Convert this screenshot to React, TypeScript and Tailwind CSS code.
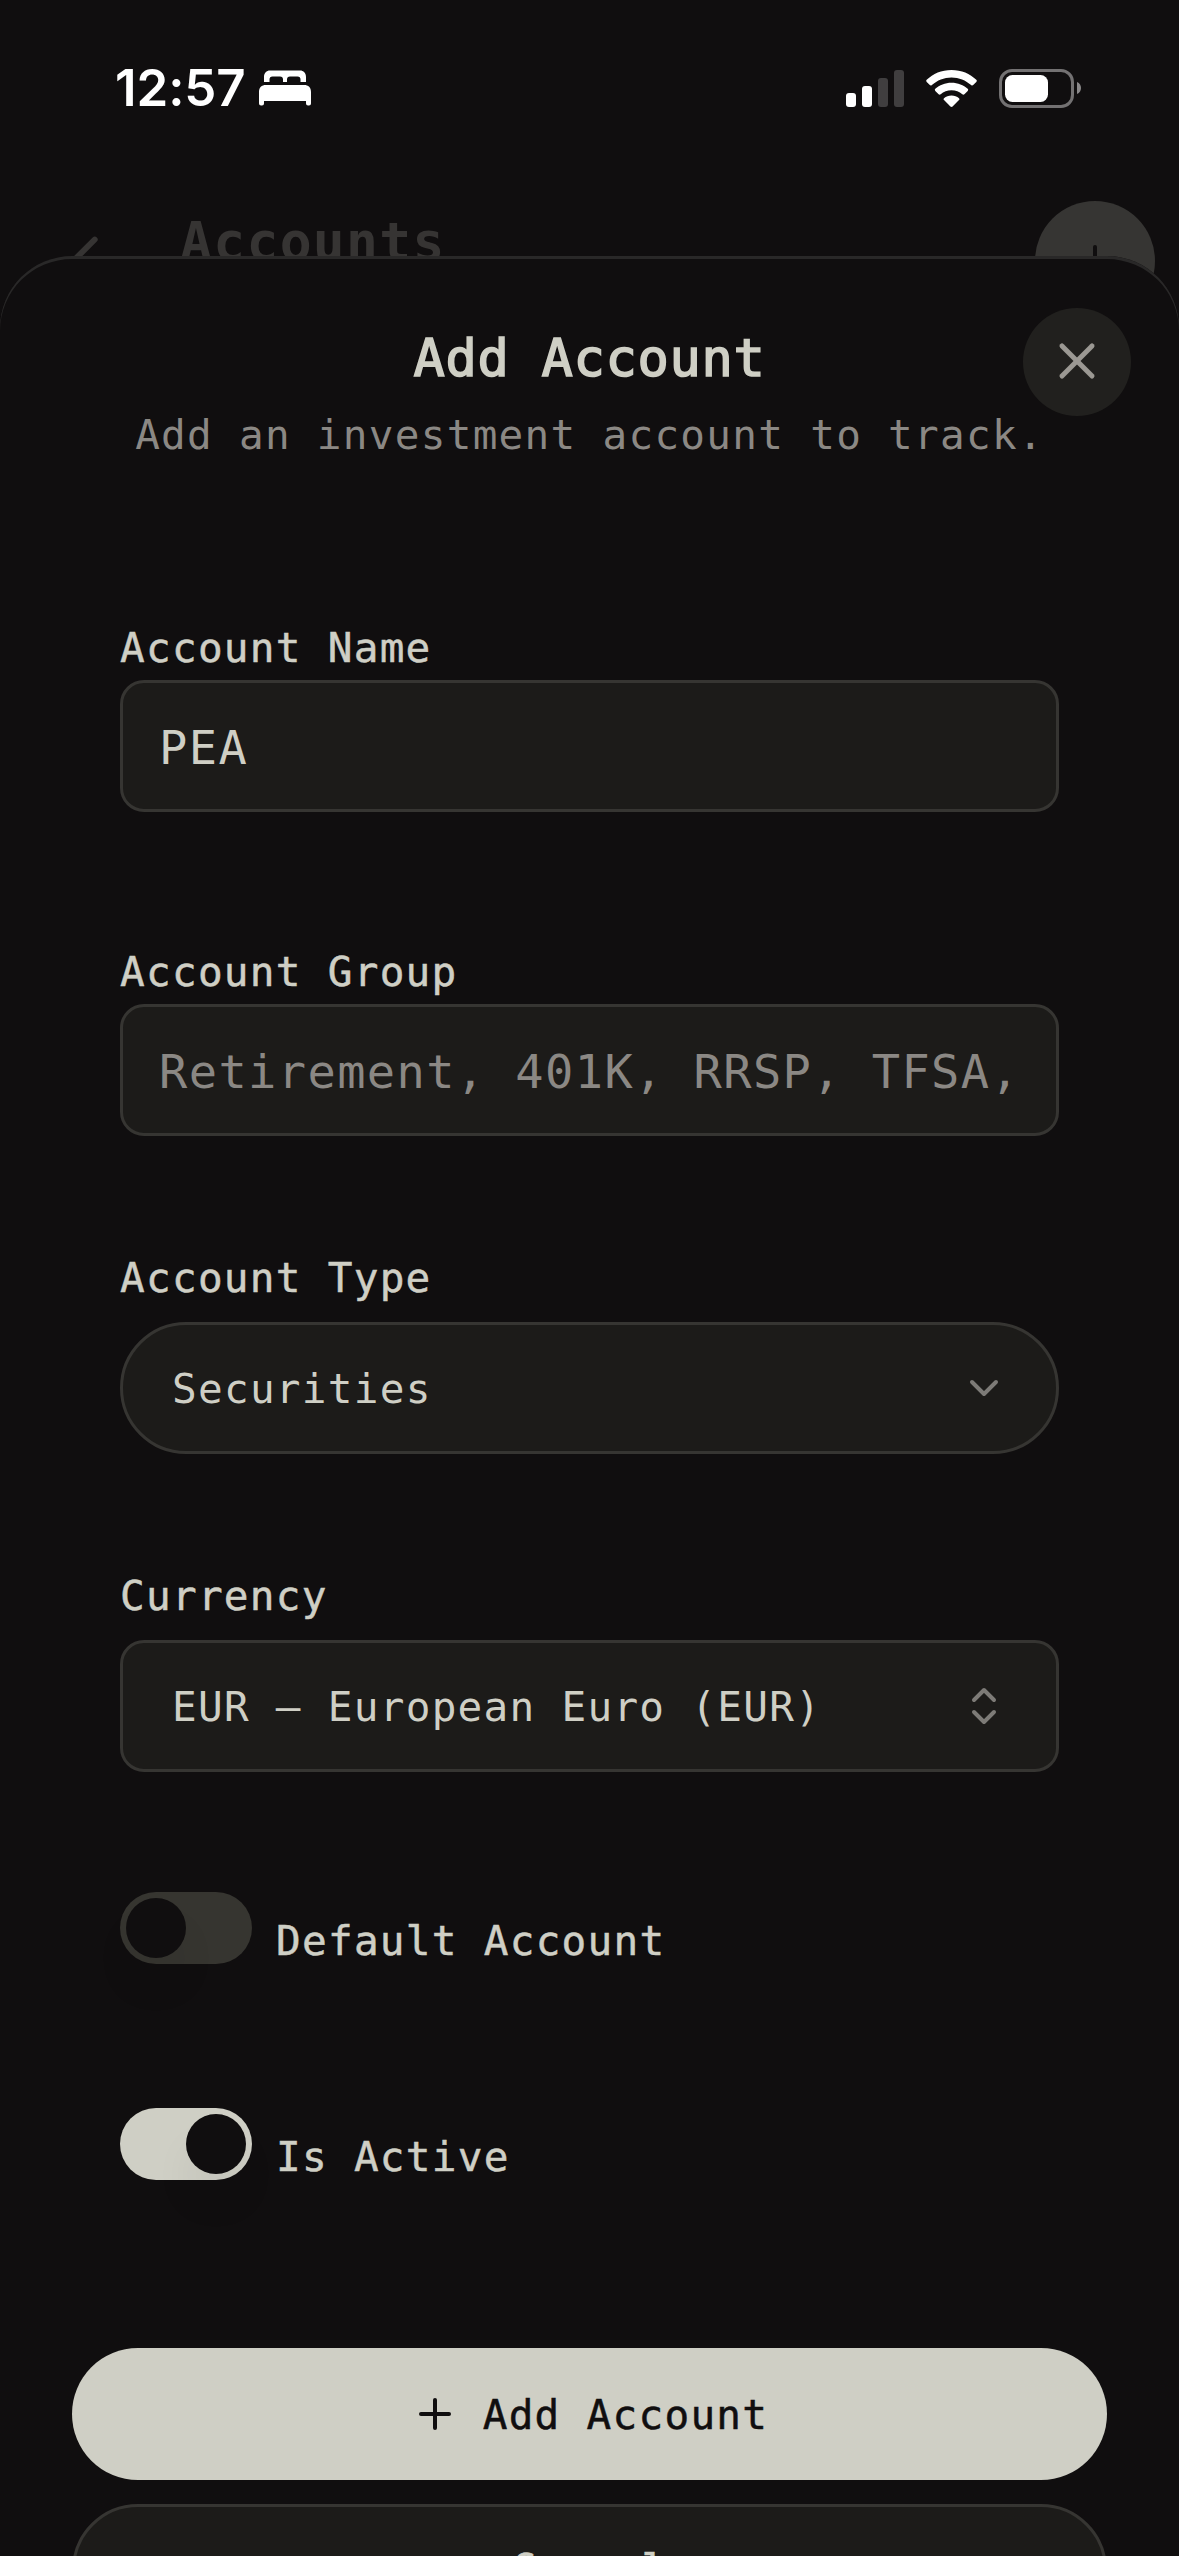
import type { ReactNode } from "react";
import { ChevronDown, ChevronLeft, ChevronsUpDown, Plus, X } from "lucide-react";

function StatusBar() {
  return (
    <div className="flex h-[201px] items-start justify-between pl-[115px] pr-[97px] pt-[57px] text-white">
      <div className="flex h-[62px] items-center">
        <span className="w-[144px] font-['Inter',sans-serif] text-[51px] font-semibold leading-[62px] tracking-[-0.100px]">
          12:57
        </span>
        <svg width="52" height="36" viewBox="0 0 52 36" fill="currentColor">
          <path d="M5 12V7C5 3 7.500 0.500 11 0.500H41C44.500 0.500 47 3 47 7V12H41.500V9.500C41.500 7.500 40.500 6.500 38.500 6.500H31C29 6.500 28 7.500 28 9.500V12H24V9.500C24 7.500 23 6.500 21 6.500H13.500C11.500 6.500 10.500 7.500 10.500 9.500V12Z" />
          <path d="M0 22C0 17.500 2.500 15 7 15H45C49.500 15 52 17.500 52 22V33.500Q52 35.500 50 35.500H49Q47 35.500 47 33.500V31H5V33.500Q5 35.500 3 35.500H2Q0 35.500 0 33.500Z" />
        </svg>
      </div>
      <div className="flex h-[62px] items-center">
        <div className="mr-[22px] flex h-[37px] items-end gap-[6px]">
          <div className="h-[14px] w-[10px] rounded-[3px] bg-white" />
          <div className="h-[21px] w-[10px] rounded-[3px] bg-white" />
          <div className="h-[29px] w-[10px] rounded-[3px] bg-[#403e3f]" />
          <div className="h-[37px] w-[10px] rounded-[3px] bg-[#403e3f]" />
        </div>
        <svg className="mr-[22px]" width="51" height="37" viewBox="0 0 51 37" fill="currentColor">
          <path d="M25.500 0C35.500 0 44 3.700 50.300 9.800Q51.300 10.800 50.300 11.900L47.200 15.100Q46.200 16 45.100 15C39.800 10.200 33 7.400 25.500 7.400S11.200 10.200 5.900 15Q4.800 16 3.800 15.100L0.700 11.900Q-0.300 10.800 0.700 9.800C7 3.700 15.500 0 25.500 0Z" />
          <path d="M25.500 12.700C31.900 12.700 37.500 15 41.700 18.800Q42.800 19.900 41.700 21L38.400 24.300Q37.400 25.200 36.300 24.300C33.400 21.800 29.700 20.300 25.500 20.300S17.600 21.800 14.700 24.300Q13.600 25.200 12.600 24.300L9.300 21Q8.200 19.900 9.300 18.800C13.500 15 19.100 12.700 25.500 12.700Z" />
          <path d="M25.500 25.500C28.400 25.500 31 26.500 33 28.200Q33.900 29.100 33 30.100L26.600 36.500Q25.500 37.400 24.400 36.500L18 30.100Q17.100 29.100 18 28.200C20 26.500 22.600 25.500 25.500 25.500Z" />
        </svg>
        <svg width="83" height="39" viewBox="0 0 83 39">
          <rect x="1.500" y="1.500" width="72" height="36" rx="11.500" fill="none" stroke="#737172" strokeWidth="3" />
          <rect x="6" y="6" width="43" height="27" rx="7.500" fill="#fff" />
          <path d="M78 13C80.800 14.200 82 16.500 82 19S80.800 23.800 78 25Z" fill="#8a8889" />
        </svg>
      </div>
    </div>
  );
}

function PageHeader() {
  return (
    <div className="flex h-[120px] items-start pl-[46px] pr-[24px] text-[#363433]">
      <ChevronLeft className="mt-[19px] size-[78px]" strokeWidth={1.8} />
      <div className="ml-[56px] mt-[11px] flex-1 text-[53px] font-bold leading-[60px] tracking-[1.300px]">
        Accounts
      </div>
      <div className="flex size-[120px] items-center justify-center rounded-full bg-[#363533] text-[#100e0f]">
        <Plus className="size-[48px]" strokeWidth={2} />
      </div>
    </div>
  );
}

function Label({ children }: { children: ReactNode }) {
  return (
    <div className="text-[41px] leading-[60px] tracking-[1.280px] [-webkit-text-stroke:0.500px_#cfcfc5]">
      {children}
    </div>
  );
}

function Switch({ on, label }: { on?: boolean; label: string }) {
  return (
    <div className="flex h-[72px] items-center gap-[24px]">
      <div
        className={
          on
            ? "flex h-[72px] w-[132px] justify-end rounded-full bg-[#cfcfc5] p-[6px]"
            : "flex h-[72px] w-[132px] rounded-full bg-[#363530] p-[6px]"
        }
      >
        <div className="size-[60px] rounded-full bg-[#100e0f] shadow-[0_30px_45px_-9px_rgb(0_0_0/0.1)]" />
      </div>
      <div className="pt-[26px]">
        <Label>{label}</Label>
      </div>
    </div>
  );
}

const field = "flex h-[132px] items-center border-[3px] border-[#363532] bg-[#1c1b19]";

export default function App() {
  return (
    <div className="h-[2556px] w-[1179px] overflow-hidden bg-[#100e0f] font-['DejaVu_Sans_Mono',monospace] text-[#cfcfc5]">
      <StatusBar />
      <PageHeader />
      <div className="relative -mt-[65px] h-[2300px] rounded-t-[72px] bg-[#100e0f] px-[72px] pt-[73px] shadow-[inset_0_3px_0_#292828]">
        <div className="text-center text-[52px] leading-[58px] tracking-[0.700px] [-webkit-text-stroke:1.600px_#cfcfc5]">
          Add Account
        </div>
        <div className="mt-[18px] text-center text-[41px] leading-[60px] tracking-[1.280px] text-[#8b8884]">
          Add an investment account to track.
        </div>
        <button
          aria-label="Close"
          className="absolute right-[48px] top-[52px] flex size-[108px] items-center justify-center rounded-full bg-[#21201e] pb-[2px] text-[#9b9893]"
        >
          <X className="size-[60px]" strokeWidth={2} />
        </button>

        <div className="flex flex-col px-[48px] pt-[153px]">
          <div className="flex flex-col gap-[2px]">
            <Label>Account Name</Label>
            <div className={`${field} rounded-[24px] px-[36px] pt-[4px] text-[47px] tracking-[1.400px]`}>PEA</div>
          </div>
          <div className="mt-[130px] flex flex-col gap-[2px]">
            <Label>Account Group</Label>
            <div className={`${field} whitespace-nowrap rounded-[24px] px-[36px] pt-[4px] text-[47px] tracking-[1.400px] text-[#8b8884]`}>
              Retirement, 401K, RRSP, TFSA,
            </div>
          </div>
          <div className="mt-[112px] flex flex-col gap-[14px]">
            <Label>Account Type</Label>
            <div className={`${field} justify-between rounded-full px-[48px] text-[41px] tracking-[1.280px]`}>
              <span className="pl-px pt-[3px]">Securities</span>
              <ChevronDown className="mb-px size-[48px] text-[#7d7b77]" strokeWidth={2} />
            </div>
          </div>
          <div className="mt-[112px] flex flex-col gap-[14px]">
            <Label>Currency</Label>
            <div className={`${field} justify-between rounded-[24px] px-[48px] text-[41px] tracking-[1.280px]`}>
              <span className="pl-px pt-[3px]">EUR – European Euro (EUR)</span>
              <ChevronsUpDown className="mb-px size-[48px] text-[#7d7b77]" strokeWidth={2} />
            </div>
          </div>
          <div className="mt-[120px] flex flex-col gap-[144px]">
            <Switch label="Default Account" />
            <Switch on label="Is Active" />
          </div>
        </div>

        <div className="mt-[168px] flex flex-col gap-[24px]">
          <button className="flex h-[132px] items-center justify-center gap-[24px] rounded-full bg-[#cfcfc5] text-[41px] tracking-[1.280px] text-[#100e0f] [-webkit-text-stroke:0.500px_#100e0f]">
            <Plus className="size-[48px]" strokeWidth={2} />
            <span className="pt-[3px]">Add Account</span>
          </button>
          <button className="flex h-[132px] items-center justify-center rounded-full border-[3px] border-[#363532] bg-[#1c1b19] text-[41px] tracking-[1.280px] [-webkit-text-stroke:0.500px_#cfcfc5]">
            Cancel
          </button>
        </div>
      </div>
    </div>
  );
}
